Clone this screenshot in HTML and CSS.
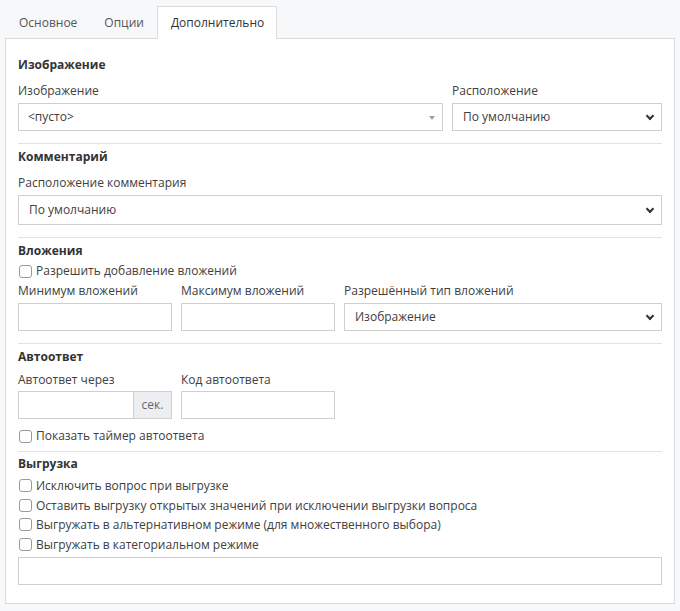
FILE: index.html
```html
<!DOCTYPE html>
<html lang="ru">
<head>
    <meta charset="UTF-8">
    <title>Свойства вопроса</title>
    <link rel="stylesheet" href="styles.css">
</head>
<body>
    <div class="tabs">
        <div class="tab">Основное</div>
        <div class="tab">Опции</div>
        <div class="tab active">Дополнительно</div>
    </div>

    <div class="panel">
        <!-- Изображение -->
        <div class="section">
            <div class="section-title">Изображение</div>
            <div class="row row-image">
                <div class="field">
                    <label>Изображение</label>
                    <div class="control combo">&lt;пусто&gt;<span class="caret"></span></div>
                </div>
                <div class="field">
                    <label>Расположение</label>
                    <div class="control select">По умолчанию<span class="chevron"></span></div>
                </div>
            </div>
        </div>

        <!-- Комментарий -->
        <div class="section">
            <div class="section-title">Комментарий</div>
            <div class="field">
                <label>Расположение комментария</label>
                <div class="control select tall">По умолчанию<span class="chevron"></span></div>
            </div>
        </div>

        <!-- Вложения -->
        <div class="section">
            <div class="section-title">Вложения</div>
            <div class="check"><span class="box"></span>Разрешить добавление вложений</div>
            <div class="row row-attach">
                <div class="field">
                    <label class="tight">Минимум вложений</label>
                    <div class="control"></div>
                </div>
                <div class="field">
                    <label class="tight">Максимум вложений</label>
                    <div class="control"></div>
                </div>
                <div class="field">
                    <label class="tight">Разрешённый тип вложений</label>
                    <div class="control select">Изображение<span class="chevron"></span></div>
                </div>
            </div>
        </div>

        <!-- Автоответ -->
        <div class="section short">
            <div class="section-title">Автоответ</div>
            <div class="row row-attach">
                <div class="field">
                    <label class="under-title">Автоответ через</label>
                    <div class="input-group">
                        <div class="control"></div>
                        <div class="addon">сек.</div>
                    </div>
                </div>
                <div class="field">
                    <label class="under-title">Код автоответа</label>
                    <div class="control"></div>
                </div>
            </div>
            <div class="check check-after"><span class="box"></span>Показать таймер автоответа</div>
        </div>

        <!-- Выгрузка -->
        <div class="section last">
            <div class="section-title">Выгрузка</div>
            <div class="check-list">
                <div class="check"><span class="box"></span>Исключить вопрос при выгрузке</div>
                <div class="check"><span class="box"></span>Оставить выгрузку открытых значений при исключении выгрузки вопроса</div>
                <div class="check"><span class="box"></span>Выгружать в альтернативном режиме (для множественного выбора)</div>
                <div class="check"><span class="box"></span>Выгружать в категориальном режиме</div>
            </div>
            <div class="control"></div>
        </div>
    </div>
</body>
</html>
```

FILE: styles.css
```css
body {
    margin: 0;
    padding: 6px 5px 0;
    background: #f7f8fa;
    font-family: "Open Sans", sans-serif;
    font-size: 12px;
    color: #404040;
}

.tabs {
    display: flex;
    height: 32px;
}

.tab {
    padding: 0 12px 0 13px;
    line-height: 31px;
    color: #555;
    border: 1px solid transparent;
    border-bottom: none;
}

.tab.active {
    background: #fff;
    border-color: #dcdcdc;
    color: #333;
    margin-bottom: -1px;
    position: relative;
    z-index: 1;
}

.panel {
    background: #fff;
    border: 1px solid #dcdcdc;
    padding: 16px 12px 0;
    height: 566px;
    box-sizing: border-box;
}

.section {
    border-bottom: 1px solid #e3e3e3;
    padding-bottom: 12px;
    margin-bottom: 3px;
}

.section.short {
    padding-bottom: 5px;
    margin-bottom: 2px;
}

.section.last {
    border-bottom: none;
    padding-bottom: 0;
}

.section-title {
    font-weight: bold;
    color: #333;
    line-height: 20px;
}

.row {
    display: grid;
    gap: 9px;
}

.row-image {
    grid-template-columns: 1fr 210px;
}

.row-attach {
    grid-template-columns: 154px 154px 1fr;
}

.field label {
    display: block;
    line-height: 20px;
    margin: 6px 0 2px;
}

.field label.tight {
    margin: 0 0 2px;
}

.field label.under-title {
    margin: 3px 0 1px;
}

.control {
    height: 28px;
    box-sizing: border-box;
    border: 1px solid #cfcfcf;
    background: #fff;
    padding: 0 10px;
    line-height: 26px;
    position: relative;
}

.control.tall {
    height: 30px;
    line-height: 28px;
}

.combo {
    padding-left: 9px;
}

.caret {
    position: absolute;
    right: 7px;
    top: 12px;
    border-left: 3px solid transparent;
    border-right: 3px solid transparent;
    border-top: 4px solid #a0a0a0;
}

.chevron {
    position: absolute;
    right: 8px;
    top: 9px;
    width: 4px;
    height: 4px;
    border-right: 2px solid #333;
    border-bottom: 2px solid #333;
    transform: rotate(45deg);
}

.tall .chevron {
    top: 10px;
}

.check {
    display: flex;
    align-items: center;
    line-height: 20px;
}

.box {
    width: 11px;
    height: 11px;
    border: 1px solid #9a9a9a;
    border-radius: 3px;
    margin: 0 4px 0 1px;
    background: #fff;
}

.check-after {
    margin-top: 7px;
}

.check-list {
    margin: 2px 0 3px;
}

.check-list .check {
    line-height: 19.5px;
}

.input-group {
    display: flex;
}

.input-group .control {
    flex: 1;
}

.addon {
    width: 38px;
    height: 28px;
    box-sizing: border-box;
    border: 1px solid #cfcfcf;
    border-left: none;
    background: #eceef1;
    color: #666;
    line-height: 26px;
    text-align: center;
}
```
